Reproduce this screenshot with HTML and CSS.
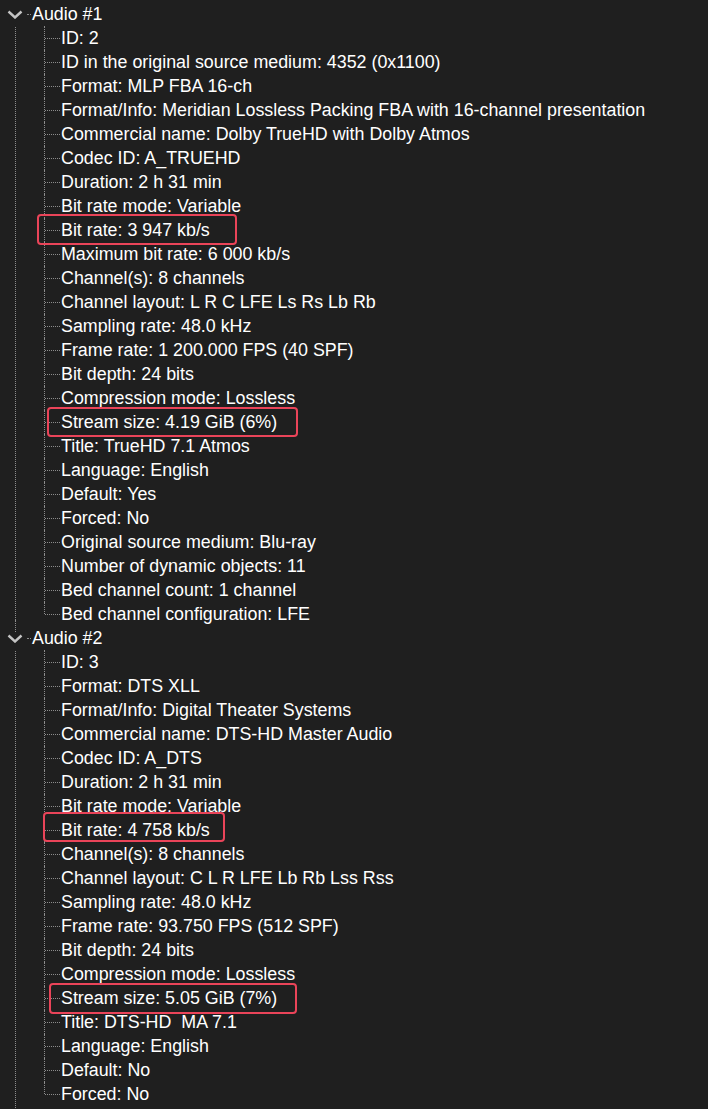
FILE: index.html
```html
<!DOCTYPE html>
<html>
<head>
<meta charset="utf-8">
<link rel="stylesheet" href="styles.css">
</head>
<body>
<div class="page">
  <div class="group">
    <div class="head"><span class="chev"><svg width="16" height="9" viewBox="0 0 16 9"><path d="M1.5 1.5 L8 7.5 L14.5 1.5" fill="none" stroke="#c4c4c4" stroke-width="2.4"/></svg></span><span class="hline"></span><span class="label">Audio #1</span></div>
    <ul class="children">
      <li>ID: 2</li>
      <li>ID in the original source medium: 4352 (0x1100)</li>
      <li>Format: MLP FBA 16-ch</li>
      <li>Format/Info: Meridian Lossless Packing FBA with 16-channel presentation</li>
      <li>Commercial name: Dolby TrueHD with Dolby Atmos</li>
      <li>Codec ID: A_TRUEHD</li>
      <li>Duration: 2 h 31 min</li>
      <li>Bit rate mode: Variable</li>
      <li>Bit rate: 3 947 kb/s</li>
      <li>Maximum bit rate: 6 000 kb/s</li>
      <li>Channel(s): 8 channels</li>
      <li>Channel layout: L R C LFE Ls Rs Lb Rb</li>
      <li>Sampling rate: 48.0 kHz</li>
      <li>Frame rate: 1 200.000 FPS (40 SPF)</li>
      <li>Bit depth: 24 bits</li>
      <li>Compression mode: Lossless</li>
      <li>Stream size: 4.19 GiB (6%)</li>
      <li>Title: TrueHD 7.1 Atmos</li>
      <li>Language: English</li>
      <li>Default: Yes</li>
      <li>Forced: No</li>
      <li>Original source medium: Blu-ray</li>
      <li>Number of dynamic objects: 11</li>
      <li>Bed channel count: 1 channel</li>
      <li>Bed channel configuration: LFE</li>
    </ul>
  </div>
  <div class="group">
    <div class="head"><span class="chev"><svg width="16" height="9" viewBox="0 0 16 9"><path d="M1.5 1.5 L8 7.5 L14.5 1.5" fill="none" stroke="#c4c4c4" stroke-width="2.4"/></svg></span><span class="hline"></span><span class="label">Audio #2</span></div>
    <ul class="children">
      <li>ID: 3</li>
      <li>Format: DTS XLL</li>
      <li>Format/Info: Digital Theater Systems</li>
      <li>Commercial name: DTS-HD Master Audio</li>
      <li>Codec ID: A_DTS</li>
      <li>Duration: 2 h 31 min</li>
      <li>Bit rate mode: Variable</li>
      <li>Bit rate: 4 758 kb/s</li>
      <li>Channel(s): 8 channels</li>
      <li>Channel layout: C L R LFE Lb Rb Lss Rss</li>
      <li>Sampling rate: 48.0 kHz</li>
      <li>Frame rate: 93.750 FPS (512 SPF)</li>
      <li>Bit depth: 24 bits</li>
      <li>Compression mode: Lossless</li>
      <li>Stream size: 5.05 GiB (7%)</li>
      <li>Title: DTS-HD&nbsp; MA 7.1</li>
      <li>Language: English</li>
      <li>Default: No</li>
      <li>Forced: No</li>
    </ul>
  </div>
  <div class="mark m1"></div>
  <div class="mark m2"></div>
  <div class="mark m3"></div>
  <div class="mark m4"></div>
</div>
</body>
</html>
```
FILE: styles.css
```css
html, body {
  margin: 0;
  padding: 0;
  background: #1f1f1f;
}
body {
  width: 708px;
  height: 1109px;
  overflow: hidden;
}
.page {
  position: relative;
  padding-top: 2px;
  height: 1107px;
  font-family: "Liberation Sans", Arial, sans-serif;
  font-size: 17.85px;
  color: #ffffff;
}
.group {
  position: relative;
}
.group::before {
  content: "";
  position: absolute;
  left: 15px;
  top: 25px;
  bottom: -6px;
  border-left: 1px dotted #8c8c8c;
}
.group + .group .head::before {
  content: "";
  position: absolute;
  left: 15px;
  top: -6px;
  height: 8px;
  border-left: 1px dotted #8c8c8c;
}
.group:last-of-type::before {
  bottom: -40px;
}
.head {
  position: relative;
  height: 24px;
  display: flex;
  align-items: center;
}
.chev {
  width: 16px;
  margin-left: 7px;
  display: flex;
  align-items: center;
}
.chev svg { display: block; }
.hline {
  width: 4px;
  margin-left: 4px;
  margin-right: 1px;
  border-top: 1px dotted #8c8c8c;
}
.label {
  line-height: 24px;
}
.children {
  list-style: none;
  margin: 0 0 0 44px;
  padding: 0;
}
.children li {
  position: relative;
  height: 24px;
  line-height: 24px;
  padding-left: 17px;
  white-space: nowrap;
}
.children li::before {
  content: "";
  position: absolute;
  left: 0;
  top: 0;
  bottom: 0;
  border-left: 1px dotted #8c8c8c;
}
.children li:last-child::before {
  bottom: 12px;
}
.children li::after {
  content: "";
  position: absolute;
  left: 1px;
  width: 15px;
  top: 12px;
  border-top: 1px dotted #8c8c8c;
}
.mark {
  position: absolute;
  border: 2px solid #ea4459;
  border-radius: 4px;
  box-sizing: border-box;
}
.m1 { left: 37px; top: 214px; width: 200px; height: 31px; }
.m2 { left: 47px; top: 407px; width: 251px; height: 30px; }
.m3 { left: 43px; top: 812px; width: 182px; height: 30px; }
.m4 { left: 49px; top: 983px; width: 248px; height: 31px; }
```
